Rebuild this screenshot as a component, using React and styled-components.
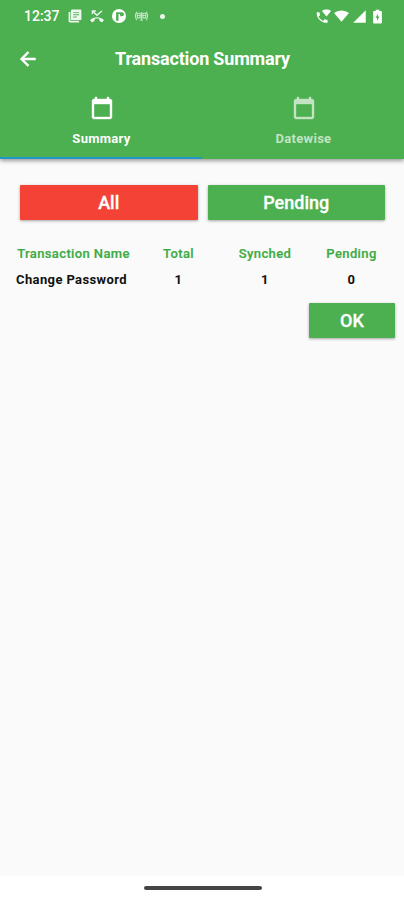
import React, { useState } from 'react';
import styled, { createGlobalStyle } from 'styled-components';

const GlobalStyle = createGlobalStyle`
    * {
        box-sizing: border-box;
    }

    body {
        margin: 0;
        background: #fafafa;
        font-family: Roboto, sans-serif;
    }
`;

const Screen = styled.div`
    display: flex;
    flex-direction: column;
    width: 404px;
    height: 900px;
    background: #fafafa;
    overflow: hidden;
`;

const Header = styled.header`
    display: flex;
    flex-direction: column;
    height: 159px;
    flex: none;
    background: #4caf50;
    color: #fff;
    box-shadow: 0 2px 4px rgba(0, 0, 0, 0.38);
`;

const StatusBar = styled.div`
    display: flex;
    align-items: center;
    justify-content: space-between;
    height: 32px;
    padding: 0 19px 0 24px;
`;

const StatusGroup = styled.div`
    display: flex;
    align-items: center;
    gap: ${ props => props.$gap}px;
`;

const Clock = styled.span`
    width: 36px;
    font-size: 14px;
    font-weight: 500;
`;

const Dot = styled.span`
    width: 5px;
    height: 5px;
    margin-left: 3px;
    border-radius: 50%;
    background: #e9f6e9;
`;

const Toolbar = styled.div`
    display: grid;
    grid-template-columns: 56px 1fr 55px;
    align-items: center;
    height: 54px;
`;

const BackButton = styled.button`
    display: flex;
    align-items: center;
    justify-content: center;
    padding: 0;
    border: 0;
    background: none;
    color: #fff;
`;

const Title = styled.h1`
    margin: 0;
    font-size: 18px;
    font-weight: 700;
    line-height: 24px;
    letter-spacing: -0.17px;
    text-align: center;
    white-space: nowrap;
`;

const Tabs = styled.div`
    display: grid;
    grid-template-columns: 1fr 1fr;
    flex: 1;
`;

const Tab = styled.button`
    display: flex;
    flex-direction: column;
    align-items: center;
    gap: 10px;
    padding: 10px 0 0 1px;
    border: 0;
    border-bottom: 2px solid ${ props => props.$active ? '#2196c8' : 'transparent'};
    background: none;
    color: ${ props => props.$active ? '#fff' : '#c2e4c3'};
    font: 700 13px/17px Roboto, sans-serif;
    letter-spacing: 0.3px;
`;

const Content = styled.main`
    display: flex;
    flex-direction: column;
    flex: 1;
    padding: 26px 9px 0;
`;

const Filters = styled.div`
    display: grid;
    grid-template-columns: 1fr 1fr;
    gap: 10px;
    padding: 0 10px 0 11px;
`;

const Button = styled.button`
    height: 35px;
    padding: 0;
    border: 0;
    border-radius: 1px;
    background: ${ props => props.$danger ? '#f44336' : '#4caf50'};
    box-shadow: 0 1px 3px rgba(0, 0, 0, 0.35);
    color: #fff;
    font: 500 18px/35px Roboto, sans-serif;
    -webkit-text-stroke: 0.3px;
`;

const Table = styled.div`
    display: grid;
    grid-template-columns: 125px 87px 86px 87px;
    grid-template-rows: 25px 26px;
    align-items: center;
    margin-top: 21px;
    text-align: center;
    font-size: 13px;
    font-weight: 700;
    white-space: nowrap;
`;

const HeadCell = styled.span`
    padding-left: ${ props => props.$wide ? 4 : 2}px;
    color: #3dab43;
    font-weight: 500;
    letter-spacing: 0.38px;
    -webkit-text-stroke: 0.2px;
`;

const Cell = styled.span`
    padding-left: ${ props => props.$wide ? 0 : 2}px;
    color: #111;
    letter-spacing: 0.38px;
`;

const Actions = styled.div`
    display: grid;
    grid-template-columns: 86px;
    justify-content: end;
    margin-top: 11px;
`;

const NavigationBar = styled.footer`
    display: flex;
    justify-content: center;
    flex: none;
    height: 24px;
    padding-top: 10px;
    padding-left: 1px;
    background: #fff;
`;

const HomeHandle = styled.div`
    width: 118px;
    height: 4px;
    border-radius: 2px;
    background: #444;
`;

function Icon({ d, size, opacity, weight }) {
    return (
        <svg
            width={size}
            height={size}
            viewBox="0 0 24 24"
            fill="currentColor"
            stroke="currentColor"
            strokeWidth={weight || 0}
            opacity={opacity}
        >
            <path fillRule="evenodd" d={d} />
        </svg>
    );
}

const icons = {
    calendar: 'M20 3h-1V1h-2v2H7V1H5v2H4c-1.1 0-2 .9-2 2v16c0 1.1.9 2 2 2h16c1.1 0 2-.9 2-2V5c0-1.1-.9-2-2-2zm0 18H4V8h16v13z',
    back: 'M21 10.7H7.2l6.1-6.1L11.5 3 2.5 12l9 9 1.8-1.7-6.1-6.1H21z',
    news: 'M7 1h14q2 0 2 2v14q0 2-2 2H7q-2 0-2-2V3q0-2 2-2zM9 5v1.5h10V5H9zm0 4v1.5h10V9H9zm0 4v1.5h6V13H9zM1 5h3v15h15v3H3q-2 0-2-2z',
    missed: 'M3 2h7v2.5H7L12 9l7.5-6.5L21.5 4 12 12.5 5 6.2V9H3zM0 19C7 12.5 17 12.5 24 19L20.5 23l-4.5-3v-3c-2.5-.8-5.5-.8-8 0v3L3.5 23z',
    parking: 'M12 0a12 12 0 1 0 0 24 12 12 0 0 0 0-24zM7 5.5h10a3.5 3.5 0 0 1 0 7h-3V8.5h-2.8V20H7z',
    wifi: 'M0 6.5C7 1 17 1 24 6.5L12 20.5z',
    signal: 'M22 2v20H2z',
    battery: 'M9 1h6v2h2.5Q19 3 19 4.5v17q0 1.5-1.5 1.5h-11Q5 23 5 21.5v-17Q5 3 6.5 3H9zm3.5 6L9 14h2.2v5l3.8-7h-2.5z',
};

function WifiCalling() {
    return (
        <svg width="15" height="15" viewBox="0 0 24 24" fill="currentColor">
            <path d="M9.5 3C13.5 0 20 0 24 3l-7.2 9z" />
            <path d="M1 5h4.5l1 5-2.5 2c1.7 3.3 4.2 5.3 7.5 7l2-2.5 5 1V22C9.5 23 .5 15 1 5z" />
        </svg>
    );
}

function Vibration() {
    return (
        <svg width="15" height="12" viewBox="0 0 16 12" fill="none" stroke="currentColor" strokeWidth="1.2" opacity="0.65">
            <path d="M3 1.5Q0 6 3 10.5M13 1.5Q16 6 13 10.5M3.5 3h3v5h-3zM9.5 3h3v5h-3zM8 2v8M3.5 5.5h9M6.5 10.5h3" />
        </svg>
    );
}

const rows = [
    { name: 'Change Password', total: 1, synched: 1, pending: 0 },
];

function App() {
    const [tab, setTab] = useState('Summary');
    const [filter, setFilter] = useState('All');

    return (
        <Screen>
            <GlobalStyle />
            <Header>
                <StatusBar>
                    <StatusGroup $gap={8}>
                        <Clock>12:37</Clock>
                        <Icon d={icons.news} size={14} opacity={0.9} />
                        <Icon d={icons.missed} size={14} opacity={0.9} />
                        <Icon d={icons.parking} size={14} />
                        <Vibration />
                        <Dot />
                    </StatusGroup>
                    <StatusGroup $gap={3}>
                        <WifiCalling />
                        <Icon d={icons.wifi} size={15} />
                        <Icon d={icons.signal} size={15} />
                        <Icon d={icons.battery} size={15} />
                    </StatusGroup>
                </StatusBar>
                <Toolbar>
                    <BackButton aria-label="Back">
                        <Icon d={icons.back} size={20} weight={0.6} />
                    </BackButton>
                    <Title>Transaction Summary</Title>
                </Toolbar>
                <Tabs>
                    {['Summary', 'Datewise'].map(name => (
                        <Tab key={name} $active={tab === name} onClick={() => setTab(name)}>
                            <Icon d={icons.calendar} size={24} weight={0.4} />
                            {name}
                        </Tab>
                    ))}
                </Tabs>
            </Header>
            <Content>
                <Filters>
                    <Button $danger={filter === 'All'} onClick={() => setFilter('All')}>All</Button>
                    <Button $danger={filter === 'Pending'} onClick={() => setFilter('Pending')}>Pending</Button>
                </Filters>
                <Table>
                    <HeadCell $wide>Transaction Name</HeadCell>
                    <HeadCell>Total</HeadCell>
                    <HeadCell>Synched</HeadCell>
                    <HeadCell>Pending</HeadCell>
                    {rows.map(row => (
                        <React.Fragment key={row.name}>
                            <Cell $wide>{row.name}</Cell>
                            <Cell>{row.total}</Cell>
                            <Cell>{row.synched}</Cell>
                            <Cell>{row.pending}</Cell>
                        </React.Fragment>
                    ))}
                </Table>
                <Actions>
                    <Button>OK</Button>
                </Actions>
            </Content>
            <NavigationBar>
                <HomeHandle />
            </NavigationBar>
        </Screen>
    );
}

export default App;
